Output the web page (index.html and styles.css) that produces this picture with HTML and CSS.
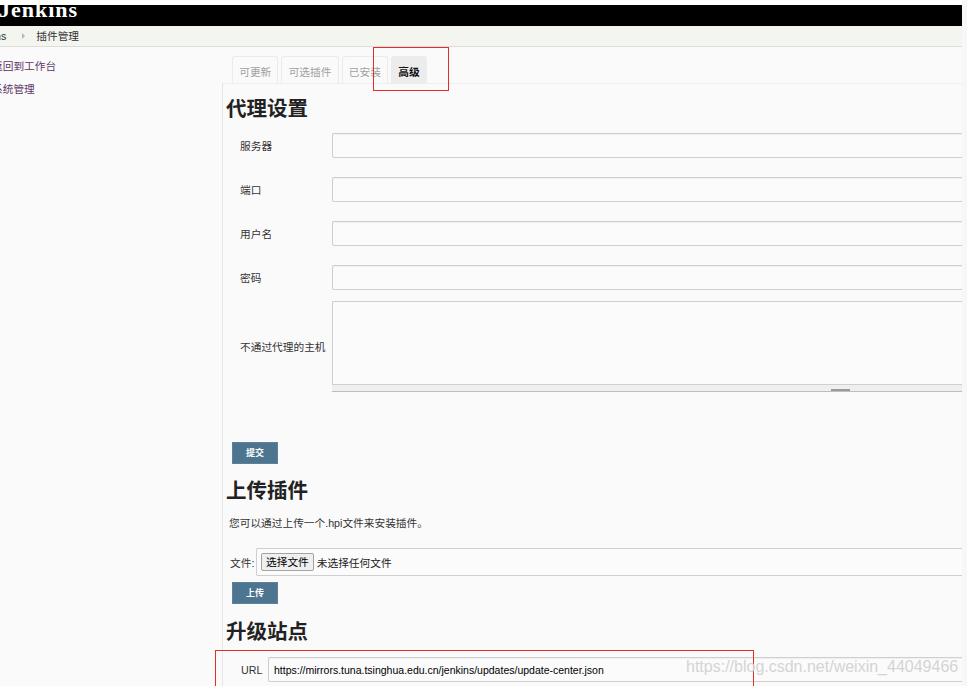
FILE: index.html
```html
<!DOCTYPE html>
<html lang="zh-CN">
<head>
<meta charset="utf-8">
<title>插件管理 [Jenkins]</title>
<link rel="stylesheet" href="styles.css">
</head>
<body>
<div class="page">
  <header class="header"><span class="logo">Jenkins</span></header>
  <nav class="crumbs">
    <span class="crumb crumb-first">Jenkins</span>
    <span class="crumb-sep"></span>
    <span class="crumb">插件管理</span>
  </nav>
  <div class="main">
    <aside class="side">
      <a class="task">返回到工作台</a>
      <a class="task">系统管理</a>
    </aside>
    <section class="content">
      <div class="tabs">
        <span class="tab">可更新</span>
        <span class="tab">可选插件</span>
        <span class="tab">已安装</span>
        <span class="tab tab-active">高级</span>
      </div>
      <div class="panel">
        <h1 class="title title-first">代理设置</h1>
        <div class="form">
          <div class="row">
            <span class="label">服务器</span>
            <input class="field" type="text">
          </div>
          <div class="row">
            <span class="label">端口</span>
            <input class="field" type="text">
          </div>
          <div class="row">
            <span class="label">用户名</span>
            <input class="field" type="text">
          </div>
          <div class="row">
            <span class="label">密码</span>
            <input class="field" type="password">
          </div>
          <div class="row row-area">
            <span class="label">不通过代理的主机</span>
            <div class="area-wrap">
              <textarea class="area"></textarea>
              <div class="grip"><span class="grip-handle"></span></div>
            </div>
          </div>
        </div>
        <button class="btn btn-submit" type="button">提交</button>

        <h1 class="title title-upload">上传插件</h1>
        <p class="desc">您可以通过上传一个.hpi文件来安装插件。</p>
        <div class="file-row">
          <span class="file-label">文件:</span>
          <div class="file-box">
            <span class="file-btn">选择文件</span>
            <span class="file-none">未选择任何文件</span>
          </div>
        </div>
        <button class="btn btn-upload" type="button">上传</button>

        <h1 class="title title-site">升级站点</h1>
        <div class="url-row">
          <span class="url-label">URL</span>
          <input class="field url-field" type="text" value="https://mirrors.tuna.tsinghua.edu.cn/jenkins/updates/update-center.json">
        </div>
      </div>
    </section>
  </div>
</div>
<div class="mark mark-tab"></div>
<div class="mark mark-url"></div>
<div class="watermark">https://blog.csdn.net/weixin_44049466</div>
</body>
</html>
```

FILE: styles.css
```css
* { box-sizing: border-box; }
html, body { margin: 0; padding: 0; }
body {
  width: 967px;
  height: 686px;
  overflow: hidden;
  position: relative;
  background: #f7f7f7;
  font-family: "Liberation Sans", "Noto Sans CJK SC", sans-serif;
  font-size: 10.7px;
  color: #333;
}
.page {
  width: 962px;
  height: 686px;
  border-top: 5px solid #fff;
  background: #fafafa;
  overflow: hidden;
}
.header {
  height: 21px;
  background: #000;
  overflow: hidden;
}
.logo {
  display: block;
  margin-left: -1px;
  font-family: "Liberation Serif", serif;
  font-weight: bold;
  font-size: 22px;
  letter-spacing: 1px;
  line-height: 10px;
  color: #fff;
}
.crumbs {
  height: 21px;
  display: flex;
  align-items: center;
  background: #f3f6ef;
  border-bottom: 1px solid #dcdcdc;
  line-height: 20px;
  overflow: hidden;
}
.crumb { color: #333; white-space: nowrap; }
.crumb-first { margin-left: -30px; }
.crumb-sep {
  width: 0;
  height: 0;
  margin: 0 11px 0 16px;
  border-left: 3px solid #b5b5b5;
  border-top: 3px solid transparent;
  border-bottom: 3px solid transparent;
}
.main { display: flex; }
.side {
  width: 222px;
  flex: none;
  padding-top: 8px;
}
.task {
  display: block;
  margin-left: -8px;
  line-height: 23px;
  color: #5c3566;
  white-space: nowrap;
}
.content {
  flex: 1;
  min-width: 0;
  padding-top: 9px;
}
.tabs {
  display: flex;
  gap: 3px;
  margin-left: 10px;
}
.tab {
  height: 27px;
  padding: 3px 6.2px 0;
  line-height: 24px;
  border: 1px solid #ebebeb;
  border-bottom: none;
  border-radius: 3px 3px 0 0;
  color: #a0a0a0;
  background: #fafafa;
}
.tab-active {
  background: #ececec;
  border-color: #ececec;
  color: #111;
  font-weight: bold;
}
.panel {
  border-left: 1px solid #e6e6e6;
  border-top: 1px solid #eeeeee;
  padding-left: 3px;
  padding-bottom: 20px;
}
.title {
  margin: 0;
  font-size: 20.5px;
  line-height: 26px;
  font-weight: bold;
  color: #222;
}
.title-first { margin-top: 12px; }
.form {
  display: flex;
  flex-direction: column;
  gap: 19px;
  margin-top: 11px;
}
.row {
  display: flex;
  align-items: center;
  margin-left: 14px;
}
.row-area { margin-top: -8px; }
.label {
  width: 92px;
  flex: none;
  color: #333;
  white-space: nowrap;
}
.field {
  flex: 1;
  min-width: 0;
  height: 25px;
  margin: 0;
  padding: 0 5px;
  border: 1px solid #cfcfcf;
  border-right: none;
  border-radius: 2px 0 0 2px;
  background: #fbfbfb;
  box-shadow: inset 0 1px 1px rgba(0,0,0,0.05);
  font-family: "Liberation Sans", "Noto Sans CJK SC", sans-serif;
  font-size: 10.5px;
  color: #000;
  outline: none;
}
.area-wrap {
  flex: 1;
  min-width: 0;
  display: flex;
  flex-direction: column;
}
.area {
  display: block;
  width: 100%;
  height: 84px;
  margin: 0;
  border: 1px solid #cfcfcf;
  border-right: none;
  border-radius: 2px 0 0 0;
  background: #fbfbfb;
  resize: none;
  outline: none;
}
.grip {
  height: 7px;
  display: flex;
  align-items: flex-end;
  padding-left: 499px;
  background: #efefef;
  border-bottom: 1px solid #bdbdbd;
}
.grip-handle {
  width: 19px;
  height: 2px;
  background: #9a9a9a;
}
.btn {
  display: block;
  width: 46px;
  height: 22px;
  margin-left: 6px;
  padding: 0;
  border: 1px solid #5d8299;
  background: #4e7590;
  color: #fff;
  font-family: "Noto Sans CJK SC", sans-serif;
  font-weight: bold;
  font-size: 9px;
  line-height: 20px;
}
.btn-submit { margin-top: 50px; }
.title-upload { margin-top: 14px; }
.desc {
  margin: 12px 0 0 3px;
  line-height: 14px;
  color: #333;
}
.file-row {
  display: flex;
  align-items: center;
  margin-top: 18px;
}
.file-label {
  width: 26px;
  flex: none;
  margin-left: 4px;
  color: #333;
}
.file-box {
  flex: 1;
  height: 28px;
  display: flex;
  align-items: center;
  padding-left: 4px;
  border: 1px solid #cfcfcf;
  border-right: none;
  border-radius: 2px 0 0 2px;
  background: #fbfbfb;
}
.file-btn {
  height: 18px;
  padding: 0 4px;
  line-height: 16px;
  border: 1px solid #a3a3a3;
  border-radius: 2px;
  background: #efefef;
  color: #000;
}
.file-none { margin-left: 3px; color: #222; }
.btn-upload { margin-top: 6px; }
.title-site { margin-top: 15px; }
.url-row {
  display: flex;
  align-items: center;
  margin-top: 12px;
}
.url-label {
  width: 27px;
  flex: none;
  margin-left: 15px;
  color: #333;
}
.mark {
  position: absolute;
  border: 1px solid #e82a2a;
}
.mark-tab { left: 373px; top: 47px; width: 76px; height: 44px; }
.mark-url { left: 215px; top: 650px; width: 539px; height: 60px; }
.watermark {
  position: absolute;
  left: 686px;
  top: 657px;
  line-height: 20px;
  font-family: "Liberation Sans", sans-serif;
  font-size: 16px;
  color: #d4d4d4;
  white-space: nowrap;
}
```
